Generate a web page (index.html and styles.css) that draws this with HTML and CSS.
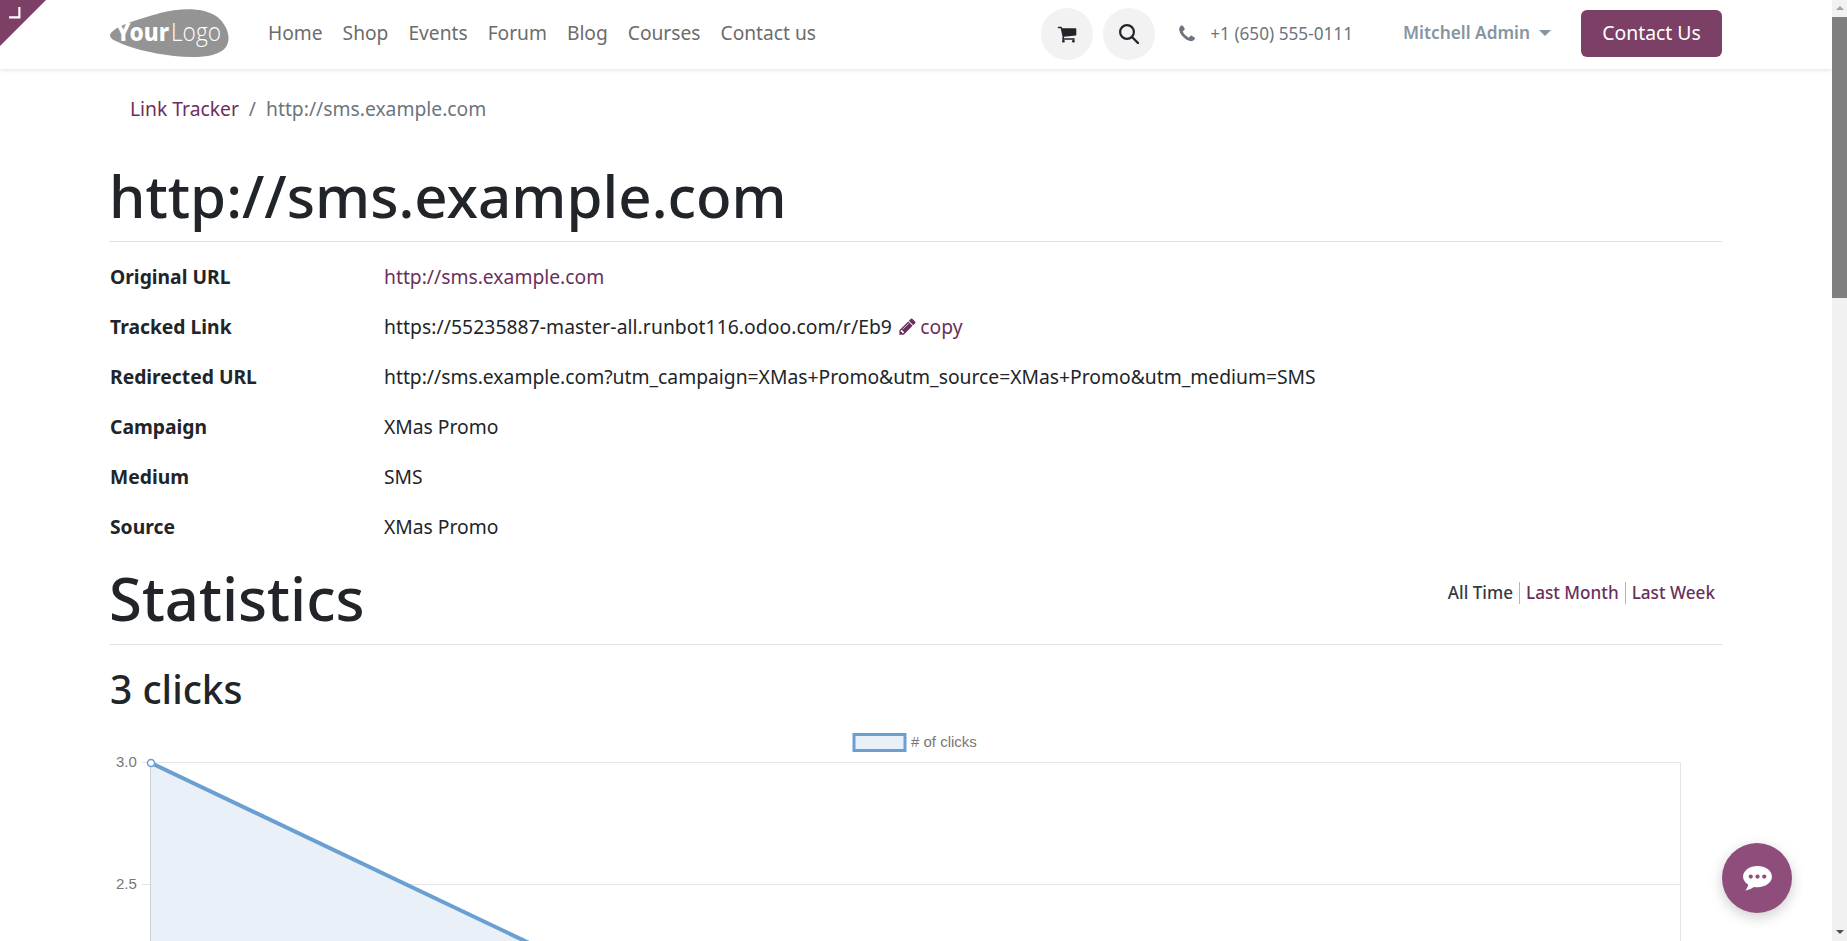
FILE: index.html
```html
<!DOCTYPE html>
<html lang="en">
<head>
<meta charset="utf-8">
<title>Link Tracker</title>
<link rel="stylesheet" href="styles.css">
</head>
<body>
<div class="page">
  <div class="corner"><svg class="corner-icon" viewBox="0 0 12 12"><path d="M10.500 1v9.500H1" fill="none" stroke="#fff" stroke-width="2"/></svg></div>
  <header class="header">
    <div class="header-inner">
      <svg class="logo" viewBox="0 0 120 52">
        <path d="M0 27C3 18 30 11 50 5C70 0 92 -1 106 8C117 16 122 30 116 39C108 50 84 50 64 48C40 45 20 40 8 34C3 32 0 30 0 27Z" fill="#949494"/>
        <text x="6" y="33" class="logo-your" textLength="53" lengthAdjust="spacingAndGlyphs">Your</text>
        <text x="61" y="33" class="logo-logo" textLength="50" lengthAdjust="spacingAndGlyphs">Logo</text>
      </svg>
      <nav class="nav">
        <a>Home</a><a>Shop</a><a>Events</a><a>Forum</a><a>Blog</a><a>Courses</a><a>Contact us</a>
      </nav>
      <div class="round first">
        <svg class="icon-cart" viewBox="0 0 1792 1792"><path fill="#212529" d="M704 1536q0 52-38 90t-90 38-90-38-38-90 38-90 90-38 90 38 38 90zm896 0q0 52-38 90t-90 38-90-38-38-90 38-90 90-38 90 38 38 90zm128-1088v512q0 24-16.500 42.500t-40.500 21.500l-1044 122q13 60 13 70 0 16-24 64h920q26 0 45 19t19 45-19 45-45 19h-1024q-26 0-45-19t-19-45q0-11 8-31.500t16-36 21.500-40 15.500-29.500l-177-823h-204q-26 0-45-19t-19-45 19-45 45-19h256q16 0 28.500 6.500t19.500 15.500 13 24.500 8 26 5.500 29.500 4.500 26h1201q26 0 45 19t19 45z"/></svg>
      </div>
      <div class="round">
        <svg class="icon-search" viewBox="0 0 20 20"><circle cx="8" cy="8" r="6.900" fill="none" stroke="#212529" stroke-width="2.200"/><path d="M13 13l6 6" stroke="#212529" stroke-width="2.400" stroke-linecap="round"/></svg>
      </div>
      <svg class="icon-phone" viewBox="0 0 1792 1792"><path fill="#6c757d" d="M1600 1240q0 27-10 70.500t-21 68.500q-21 50-122 106-94 51-186 51-27 0-53-3.500t-57.500-12.500-47-14.500-55.500-20.500-49-18q-98-35-175-83-127-79-264-216t-216-264q-48-77-83-175-3-9-18-49t-20.500-55.500-14.500-47-12.500-57.500-3.500-53q0-92 51-186 56-101 106-122 25-11 68.500-21t70.500-10q14 0 21 3 18 6 53 76 11 19 30 54t35 63.500 31 53.500q3 4 17.500 25t21.500 35.500 7 28.500q0 20-28.500 50t-62 55-62 53-28.500 46q0 9 5 22.500t8.500 20.500 14 24 11.500 19q76 137 174 235t235 174q2 1 19 11.500t24 14 20.500 8.500 22.500 5q18 0 46-28.500t53-62 55-62 50-28.500q14 0 28.500 7t35.500 21.500 25 17.500q25 15 53.500 31t63.500 35 54 30q70 35 76 53 3 7 3 21z"/></svg>
      <span class="phone">+1 (650) 555-0111</span>
      <span class="user">Mitchell Admin</span>
      <span class="caret"></span>
      <a class="cta">Contact Us</a>
    </div>
  </header>
  <main class="main">
    <div class="crumbs">
      <a class="link">Link Tracker</a><span class="sep">/</span><span class="crumb-current">http://sms.example.com</span>
    </div>
    <h1 class="title">http://sms.example.com</h1>
    <div class="fields">
      <div class="label">Original URL</div><div class="value"><a class="link">http://sms.example.com</a></div>
      <div class="label">Tracked Link</div><div class="value tracked">https://55235887-master-all.runbot116.odoo.com/r/Eb9 <a class="link copy"><svg class="icon-pencil" viewBox="0 0 1792 1792"><path fill="#6b2f5c" d="M491 1536l91-91-235-235-91 91v107h128v128h107zm523-928q0-22-22-22-10 0-17 7l-542 542q-7 7-7 17 0 22 22 22 10 0 17-7l542-542q7-7 7-17zm-54-192l416 416-832 832h-416v-416zm683 96q0 53-37 90l-166 166-416-416 166-165q36-38 90-38 53 0 91 38l235 234q37 39 37 91z"/></svg> copy</a></div>
      <div class="label">Redirected URL</div><div class="value">http://sms.example.com?utm_campaign=XMas+Promo&amp;utm_source=XMas+Promo&amp;utm_medium=SMS</div>
      <div class="label">Campaign</div><div class="value">XMas Promo</div>
      <div class="label">Medium</div><div class="value">SMS</div>
      <div class="label">Source</div><div class="value">XMas Promo</div>
    </div>
    <div class="stats-head">
      <h2 class="stats-title">Statistics</h2>
      <div class="filters">
        <span class="filter current">All Time</span><a class="filter link">Last Month</a><a class="filter link">Last Week</a>
      </div>
    </div>
    <h3 class="clicks">3 clicks</h3>
    <svg class="chart" viewBox="0 0 1612 212" width="1612" height="212">
      <rect x="744" y="5.500" width="51" height="16" fill="#e9f0f7" stroke="#6a9fd2" stroke-width="3"/>
      <text x="801" y="18" class="chart-text legend-text"># of clicks</text>
      <g stroke="#e5e5e5" fill="none">
        <path d="M32 33.500H1570.500V212"/>
        <path d="M32 155.500H1570.500"/>
      </g>
      <path d="M40.500 33V212" stroke="#cfd3d8" fill="none"/>
      <path d="M41 34L457 232V240H41Z" fill="#e9f0f7"/>
      <path d="M41 34L457 232" stroke="#6a9fd2" stroke-width="4" fill="none"/>
      <circle cx="41" cy="34" r="3.500" fill="#fff" stroke="#6a9fd2" stroke-width="1.500"/>
      <text x="6" y="38" class="chart-text tick">3.0</text>
      <text x="6" y="160" class="chart-text tick">2.5</text>
    </svg>
  </main>
  <div class="chat">
    <svg class="icon-chat" viewBox="0 0 32 28"><path fill="#fff" d="M16 1C7.700 1 1 5.900 1 12c0 3.400 2.100 6.400 5.400 8.400-.4 2.400-1.800 4.600-3.200 6 3.200-.4 6.600-1.700 9-3.600 1.200.2 2.500.3 3.800.3 8.300 0 15-4.900 15-11.100S24.300 1 16 1z"/><g fill="#8f4d7c"><circle cx="9" cy="12" r="2.200"/><circle cx="16" cy="12" r="2.200"/><circle cx="23" cy="12" r="2.200"/></g></svg>
  </div>
</div>
<div class="scrollbar">
  <span class="arrow-up"></span>
  <div class="thumb"></div>
  <span class="arrow-down"></span>
</div>
</body>
</html>
```
FILE: styles.css
```css
* { box-sizing: border-box; }
html, body { margin: 0; height: 100%; overflow: hidden; background: #fff; }
body {
  display: flex;
  font-family: "Noto Sans", sans-serif;
  color: #212529;
  font-size: 19.300px;
}
.page { position: relative; flex: 1; height: 941px; overflow: hidden; min-width: 0; }
.corner {
  position: absolute; left: 0; top: 0; width: 46px; height: 46px;
  background: #7c3f66;
  clip-path: polygon(0 0, 100% 0, 0 100%);
  z-index: 3;
}
.corner-icon { position: absolute; left: 8px; top: 6px; width: 13px; height: 13px; }
.header { height: 69px; background: #fff; box-shadow: 0 1px 4px rgba(0,0,0,.12); position: relative; z-index: 2; }
.header-inner { height: 100%; padding: 0 110px 2px; display: flex; align-items: center; }
.logo { width: 120px; height: 52px; flex: none; overflow: visible; }
.logo-your { font: 800 25px "Noto Sans", sans-serif; fill: #fff; }
.logo-logo { font: 300 26px "Open Sans", sans-serif; fill: #fff; }
.nav { display: flex; margin-left: 38px; gap: 20px; padding-bottom: 2px; font-size: 19.200px; color: #6c6c6c; }
.round { width: 52px; height: 52px; border-radius: 50%; background: #f2f2f2; display: flex; align-items: center; justify-content: center; margin-left: 10px; flex: none; }
.round.first { margin-left: auto; }
.icon-cart { width: 20px; height: 20px; }
.icon-search { width: 20px; height: 20px; }
.icon-phone { width: 20px; height: 20px; margin-left: 22px; flex: none; }
.phone { margin-left: 13px; font-size: 17.200px; color: #6c757d; white-space: nowrap; }
.user { margin-left: 50px; font-weight: 600; font-size: 17.300px; color: #8595a2; white-space: nowrap; padding-bottom: 2px; }
.caret { margin: 0 0 2px 9px; border: 6px solid transparent; border-top-color: #8595a2; border-bottom: 0; }
.cta { margin-left: 30px; height: 47px; width: 141px; border-radius: 6px; background: #7c3f66; color: #fff; display: flex; align-items: center; justify-content: center; flex: none; padding-bottom: 2px; font-size: 19.400px; }
.main { padding: 0 110px; }
.link { color: #6b2f5c; }
.crumbs { margin-left: 20px; height: 78px; display: flex; align-items: center; color: #6c757d; }
.sep { margin: 0 10px; }
.title { margin: 0 0 0 -1px; font-size: 58.200px; font-weight: 500; line-height: 97px; height: 95px; border-bottom: 1px solid #dee2e6; }
.fields { display: grid; grid-template-columns: 274px 1fr; grid-auto-rows: 50px; align-items: center; margin-top: 9px; }
.label { font-weight: 700; }
.tracked { letter-spacing: .07px; }
.copy { margin-left: 1px; word-spacing: -2px; }
.icon-pencil { width: 19px; height: 19px; vertical-align: -2px; }
.stats-head { display: flex; justify-content: space-between; height: 92px; border-bottom: 1px solid #dee2e6; margin-top: 2px; }
.stats-title { margin: 0 0 0 -1px; font-size: 59.800px; font-weight: 500; line-height: 90px; }
.filters { display: flex; align-items: center; height: 22px; margin: 29px 1px 0 0; }
.filter { padding: 0 6px; border-left: 1px solid #adb5bd; line-height: 22px; font-weight: 500; font-size: 17.150px; }
.filter.current { border-left: 0; color: #343a40; }
.clicks { margin: 0; font-size: 39px; font-weight: 500; line-height: 88px; height: 84px; }
.chart { display: block; }
.chart-text { font: 15px "Liberation Sans", Arial, sans-serif; fill: #777; }
.chat { position: absolute; left: 1722px; top: 843px; width: 70px; height: 70px; border-radius: 50%; background: #8f4d7c; box-shadow: 0 4px 14px rgba(0,0,0,.2); display: flex; align-items: center; justify-content: center; }
.icon-chat { width: 31px; height: 27px; }
.scrollbar { width: 15px; flex: none; height: 941px; background: #f1f1f1; display: flex; flex-direction: column; align-items: center; }
.arrow-up, .arrow-down { height: 17px; width: 15px; flex: none; position: relative; }
.arrow-up::after { content: ""; position: absolute; left: 3.500px; top: 6px; border: 4px solid transparent; border-bottom-color: #a3a3a3; border-top: 0; }
.arrow-down::after { content: ""; position: absolute; left: 3.500px; top: 6px; border: 4px solid transparent; border-top-color: #505050; border-bottom: 0; }
.thumb { width: 15px; height: 281px; background: #7f7f7f; }
.arrow-down { margin-top: auto; }
```
